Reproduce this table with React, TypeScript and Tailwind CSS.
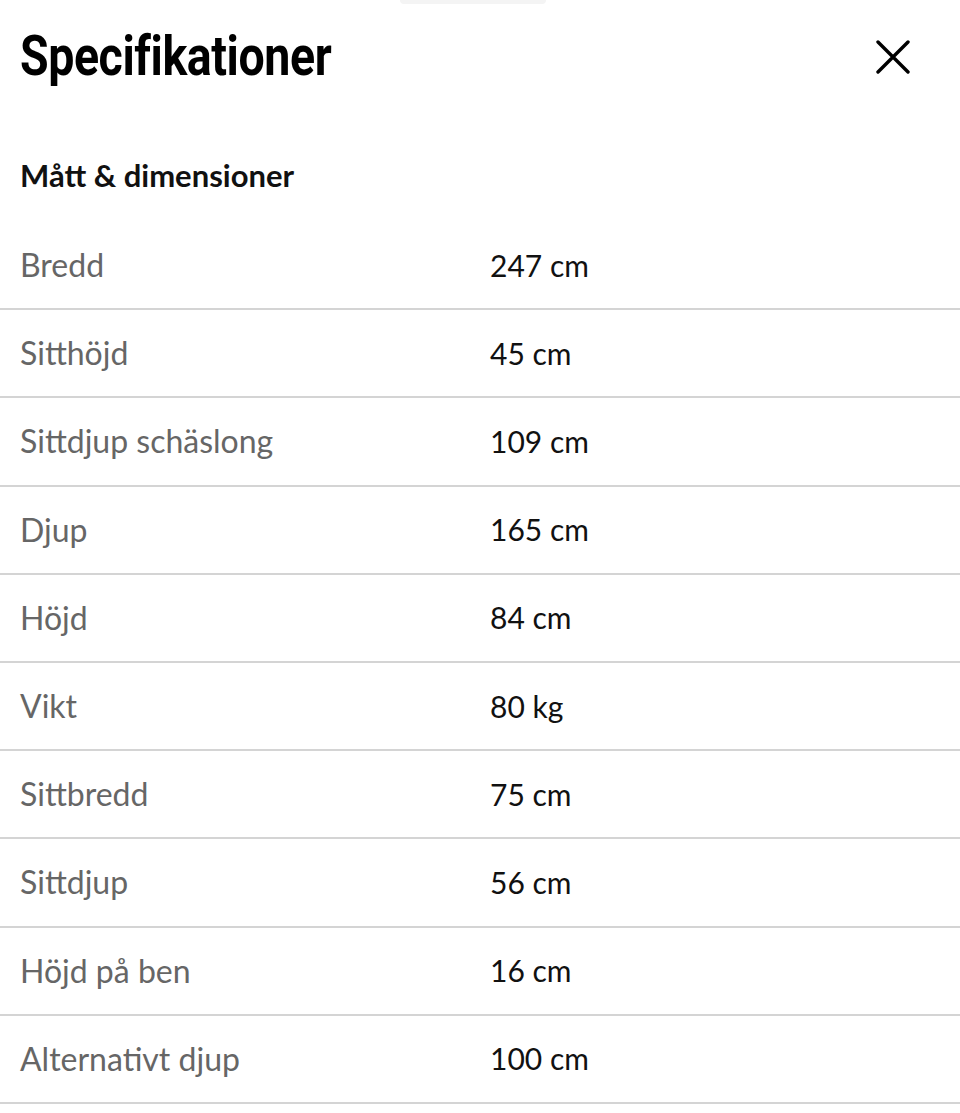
import React from "react";

const rows: [string, string][] = [
  ["Bredd", "247 cm"],
  ["Sitthöjd", "45 cm"],
  ["Sittdjup schäslong", "109 cm"],
  ["Djup", "165 cm"],
  ["Höjd", "84 cm"],
  ["Vikt", "80 kg"],
  ["Sittbredd", "75 cm"],
  ["Sittdjup", "56 cm"],
  ["Höjd på ben", "16 cm"],
  ["Alternativt djup", "100 cm"],
];

export default function App() {
  return (
    <div className="relative w-[960px] h-[1113px] bg-white overflow-hidden font-['Lato','Noto_Sans',sans-serif]">
      <div className="absolute left-[400px] top-0 w-[146px] h-[4px] bg-[#f4f4f4] rounded-b" />
      <div className="flex items-start justify-between pl-[20px] pr-[50px] pt-[28px] h-[155px]">
        <h1 className="origin-left scale-x-[0.83] whitespace-nowrap font-['Roboto',sans-serif] font-bold text-[56px] leading-none tracking-[-0.5px] text-black">
          Specifikationer
        </h1>
        <button className="mt-[12px] w-[34px] h-[34px] flex items-center justify-center text-black" aria-label="Stäng">
          <svg width="34" height="34" viewBox="0 0 34 34" fill="none" stroke="currentColor" strokeWidth="3.4" strokeLinecap="round">
            <path d="M2 2 L32 32 M32 2 L2 32" />
          </svg>
        </button>
      </div>
      <h2 className="px-[20px] font-bold text-[31px] leading-[40px] text-[#111]">Mått &amp; dimensioner</h2>
      <div className="mt-[27px]">
        {rows.map(([k, v]) => (
          <div key={k} className="flex items-center h-[88.2px] border-b-2 border-[#d4d4d4]">
            <div className="w-[490px] pl-[20px] text-[32px] text-[#666666]">{k}</div>
            <div className="text-[30px] text-[#111]">{v}</div>
          </div>
        ))}
      </div>
    </div>
  );
}
